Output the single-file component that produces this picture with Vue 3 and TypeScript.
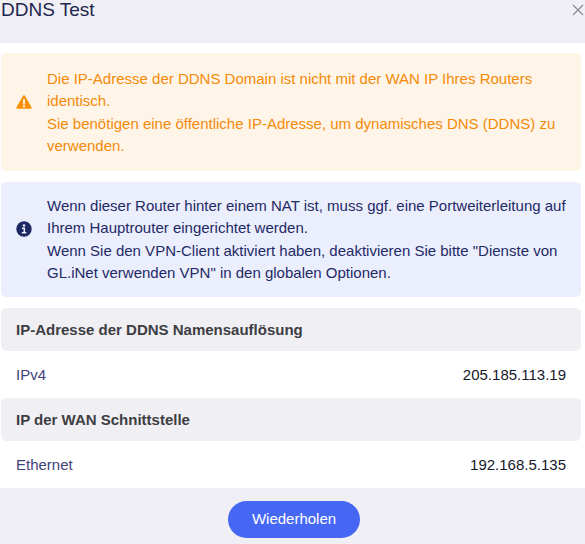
<script setup lang="ts">
interface Entry { title: string; label: string; value: string }

const warning: string[] = [
  'Die IP-Adresse der DDNS Domain ist nicht mit der WAN IP Ihres Routers identisch.',
  'Sie benötigen eine öffentliche IP-Adresse, um dynamisches DNS (DDNS) zu verwenden.',
]
const info: string[] = [
  'Wenn dieser Router hinter einem NAT ist, muss ggf. eine Portweiterleitung auf Ihrem Hauptrouter eingerichtet werden.',
  'Wenn Sie den VPN-Client aktiviert haben, deaktivieren Sie bitte "Dienste von GL.iNet verwenden VPN" in den globalen Optionen.',
]
const entries: Entry[] = [
  { title: 'IP-Adresse der DDNS Namensauflösung', label: 'IPv4', value: '205.185.113.19' },
  { title: 'IP der WAN Schnittstelle', label: 'Ethernet', value: '192.168.5.135' },
]
</script>

<template>
  <section class="dialog" role="dialog" aria-labelledby="dialog-title">
    <header class="header">
      <h1 id="dialog-title">DDNS Test</h1>
      <button class="close" type="button" aria-label="Schließen">
        <svg viewBox="0 0 12 12" width="12" height="12"><path d="M1 1l10 10M11 1L1 11" /></svg>
      </button>
    </header>
    <div class="body">
      <div class="notice warning">
        <svg class="icon" viewBox="0 0 16 16" width="16" height="16">
          <path d="M8 1.2c.5 0 .9.3 1.1.7l6.3 11.1c.5.9 0 1.8-1 1.8H1.6c-1 0-1.5-.9-1-1.8l6.3-11.1c.2-.4.6-.7 1.1-.7z" fill="#fb9005" />
          <path d="M8 5.8v4" stroke="#fff5e8" stroke-width="1.9" stroke-linecap="round" />
          <circle cx="8" cy="12.4" r="1.1" fill="#fff5e8" />
        </svg>
        <div class="lines"><p v-for="line in warning" :key="line">{{ line }}</p></div>
      </div>
      <div class="notice info">
        <svg class="icon" viewBox="0 0 16 16" width="16" height="16">
          <circle cx="8" cy="8" r="7.7" fill="#1c2763" />
          <circle cx="8" cy="4.5" r="1.3" fill="#edf0fd" />
          <path d="M6 7.2h2.3v4.4M5.8 11.7h4.5" fill="none" stroke="#edf0fd" stroke-width="1.6" />
        </svg>
        <div class="lines"><p v-for="line in info" :key="line">{{ line }}</p></div>
      </div>
      <section v-for="entry in entries" :key="entry.label">
        <h2>{{ entry.title }}</h2>
        <dl><dt>{{ entry.label }}</dt><dd>{{ entry.value }}</dd></dl>
      </section>
    </div>
    <footer class="footer"><button class="retry" type="button">Wiederholen</button></footer>
  </section>
</template>

<style>
body { background: #f0eff5; }
</style>

<style scoped>
.dialog { font-family: "Liberation Sans", Arial, sans-serif; font-size: 15px; line-height: 22px; color: #1b2040; }
h1, h2, p, dl, dd { margin: 0; }
.header { display: flex; justify-content: space-between; height: 43px; padding-left: 1px; }
h1 { font-size: 19px; line-height: 20px; font-weight: 400; color: #20264f; }
.close { align-self: flex-start; display: flex; padding: 4px 1px; border: 0; background: none; cursor: pointer; }
.close path { stroke: #8c8c94; stroke-width: 1.3; fill: none; }
.body { background: #fff; padding: 10px 4px 0 1px; }
.notice { display: flex; align-items: flex-start; gap: 15px; padding: 13px 15px; border-radius: 5px; margin-bottom: 11px; }
.icon { flex: none; margin-top: 26px; }
.lines { display: grid; gap: 1px; }
.warning { padding-top: 15px; padding-bottom: 14px; background: #fff4e8; color: #f38b08; }
.info { background: #ebeefc; color: #1e2a66; }
h2 { padding: 11px 15px 10px; background: #f0eff4; border-radius: 5px; font-size: 15px; line-height: 22px; color: #3d3d42; }
dl { display: flex; justify-content: space-between; padding: 13px 15px 12px; }
dt { color: #3f437a; }
dd { color: #15172b; }
.footer { display: flex; justify-content: center; padding: 13px 0 6px 3px; }
.retry { padding: 7px 24px 8px; border: 0; border-radius: 19px; background: #4567f4; color: #fff; font: inherit; cursor: pointer; }
</style>
